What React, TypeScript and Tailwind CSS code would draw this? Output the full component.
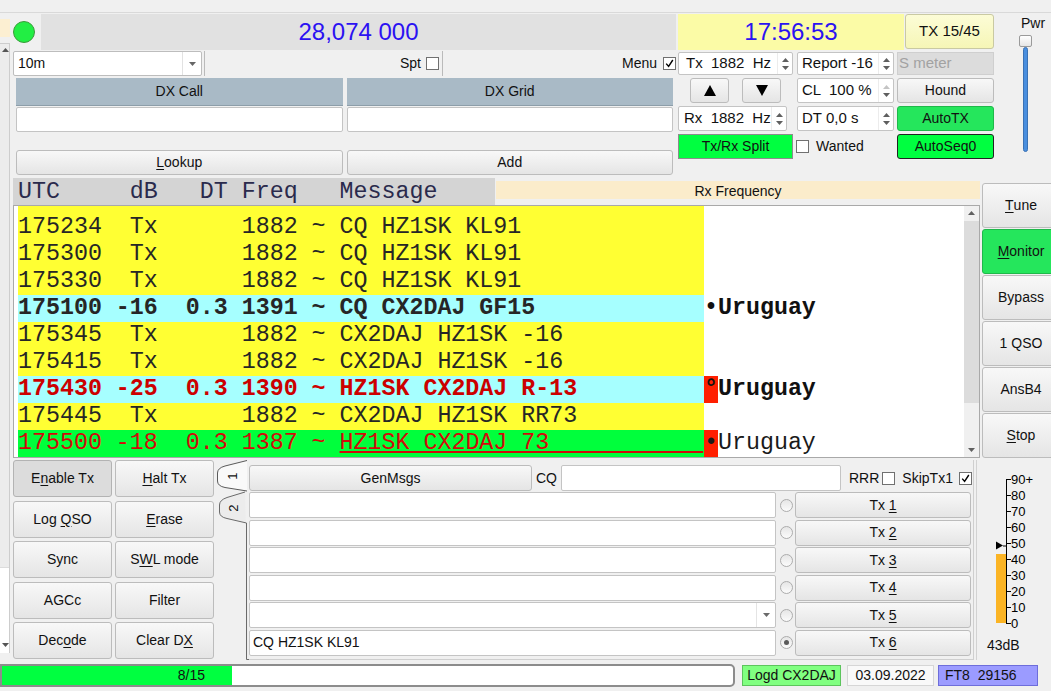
import React from "react";

const SANS = "font-['Liberation_Sans',Arial,sans-serif]";
const MONO = "font-['Liberation_Mono','Courier_New',monospace]";

const TONES: Record<string, string> = {
  plain: "rounded-[3px] border-[#bcbcbc] bg-linear-to-b from-[#f8f8f8] to-[#e5e5e5]",
  pressed: "rounded-[3px] border-[#b3b3b3] bg-[#dcdcdc]",
  green: "rounded-[3px] border-[#1fb84a] bg-[#25e65c]",
  split: "border-[#8c8c8c] bg-[#00ff40]",
  seq: "rounded-[3px] border-[#222] bg-[#00ff40]",
  tx: "rounded-[3px] border-[#c9c9a2] bg-linear-to-b from-[#fcfcd6] to-[#f6f6b6]",
};

function Btn({ children, className = "", tone = "plain" }: { children: React.ReactNode; className?: string; tone?: string }) {
  return (
    <div className={"flex items-center justify-center border text-[14px] text-[#111] whitespace-pre " + TONES[tone] + " " + className}>
      {children}
    </div>
  );
}

function U({ children }: { children: React.ReactNode }) {
  return <span className="underline underline-offset-2">{children}</span>;
}

function Check({ on = false }: { on?: boolean }) {
  return (
    <div className="w-[13px] h-[13px] border border-[#707070] bg-white flex items-center justify-center">
      {on && (
        <svg width="9" height="9" viewBox="0 0 9 9">
          <path d="M1.2 4.6 L3.6 7.4 L7.8 1" stroke="#000" strokeWidth="1.4" fill="none" />
        </svg>
      )}
    </div>
  );
}

function Radio({ on = false }: { on?: boolean }) {
  return (
    <div className="w-[13px] h-[13px] rounded-full border border-[#acacac] bg-linear-to-b from-[#e6e6e6] to-[#fbfbfb] flex items-center justify-center">
      {on && <div className="w-[5px] h-[5px] rounded-full bg-[#5a5a5a]" />}
    </div>
  );
}

function Up({ fill = "#5f5f5f" }: { fill?: string }) {
  return (
    <svg width="7" height="4" viewBox="0 0 7 4" className="block">
      <path d="M0 4 L3.5 0 L7 4Z" fill={fill} />
    </svg>
  );
}

function Down({ fill = "#5f5f5f" }: { fill?: string }) {
  return (
    <svg width="7" height="4" viewBox="0 0 7 4" className="block">
      <path d="M0 0 L3.5 4 L7 0Z" fill={fill} />
    </svg>
  );
}

function Spin({ text, className, pad, upDim = false }: { text: string; className: string; pad: string; upDim?: boolean }) {
  return (
    <div className={"flex h-full border border-[#c4c4c4] rounded-[2px] bg-white " + className}>
      <div className={"flex-1 flex items-center text-[15px] whitespace-pre " + pad}>{text}</div>
      <div className="w-[15px] flex flex-col items-center justify-center gap-[4px] border-l border-[#ececec]">
        <Up fill={upDim ? "#c4c4c4" : "#5f5f5f"} />
        <Down />
      </div>
    </div>
  );
}

function Field({ children, arrow = false }: { children?: React.ReactNode; arrow?: boolean }) {
  return (
    <div className="w-[527px] h-full flex bg-white border border-[#c4c4c4] rounded-[2px]">
      <div className="flex-1 flex items-center pl-[3px] text-[14px]">{children}</div>
      {arrow && (
        <div className="w-[19px] border-l border-[#e4e4e4] flex items-center justify-center">
          <Down fill="#6a6a6a" />
        </div>
      )}
    </div>
  );
}

const Y = "bg-[#ffff33]";
const C = "bg-[#a6ffff]";

const rows = [
  { t: "175234  Tx      1882 ~ CQ HZ1SK KL91", bg: Y },
  { t: "175300  Tx      1882 ~ CQ HZ1SK KL91", bg: Y },
  { t: "175330  Tx      1882 ~ CQ HZ1SK KL91", bg: Y },
  { t: "175100 -16  0.3 1391 ~ CQ CX2DAJ GF15", bg: C, bold: true, mark: "•", country: true },
  { t: "175345  Tx      1882 ~ CX2DAJ HZ1SK -16", bg: Y },
  { t: "175415  Tx      1882 ~ CX2DAJ HZ1SK -16", bg: Y },
  { t: "175430 -25  0.3 1390 ~ HZ1SK CX2DAJ R-13", bg: C, bold: true, red: true, mark: "°", flag: true, country: true },
  { t: "175445  Tx      1882 ~ CX2DAJ HZ1SK RR73", bg: Y },
];

function Meter() {
  const labels = ["0", "10", "20", "30", "40", "50", "60", "70", "80", "90+"];
  return (
    <svg width="73" height="200" className="block">
      <rect x="19" y="94" width="10" height="69" fill="#fbb424" />
      <line x1="29.5" y1="19" x2="29.5" y2="163.5" stroke="#000" />
      {labels.map((l, i) => {
        const y = 163 - i * 16;
        return (
          <g key={l}>
            <line x1="29" y1={y + 0.5} x2="34" y2={y + 0.5} stroke="#000" />
            <text x="34" y={y + 5} fontSize="13" fill="#000" fontFamily="Liberation Sans, Arial, sans-serif">
              {l}
            </text>
          </g>
        );
      })}
      <path d="M19 81.5 L26 85.5 L19 89.5Z" fill="#000" />
      <line x1="26" y1="86" x2="29" y2="86" stroke="#000" />
      <text x="10" y="190" fontSize="14" fill="#111" fontFamily="Liberation Sans, Arial, sans-serif">
        43dB
      </text>
    </svg>
  );
}

function Tabs() {
  return (
    <svg width="33" height="200" className="block ml-[2px]">
      <path d="M29 32 L11 37.5 Q3.5 40 3.5 45 L3.5 52 Q3.5 57 11 58.5 L30.5 63 L30.5 199.5 L33 199.5" fill="#ececec" stroke="#6a6a6a" />
      <path d="M31 0.5 L9 6 Q1.5 8 1.5 13 L1.5 21 Q1.5 26 9 27.5 L31 31" fill="#f9f9f9" stroke="#5a5a5a" />
      <text x="16" y="16" fontSize="13" textAnchor="middle" dominantBaseline="central" transform="rotate(-90 16 16)" fill="#111" fontFamily="Liberation Sans, Arial, sans-serif">
        1
      </text>
      <text x="17" y="48" fontSize="13" textAnchor="middle" dominantBaseline="central" transform="rotate(-90 17 48)" fill="#111" fontFamily="Liberation Sans, Arial, sans-serif">
        2
      </text>
    </svg>
  );
}

export default function App() {
  const leftBtns: [React.ReactNode, string][] = [
    [<>E<U>n</U>able Tx</>, "pressed"],
    [<><U>H</U>alt Tx</>, "plain"],
    [<>Log <U>Q</U>SO</>, "plain"],
    [<><U>E</U>rase</>, "plain"],
    [<>Sync</>, "plain"],
    [<>S<U>W</U>L mode</>, "plain"],
    [<>AGCc</>, "plain"],
    [<>Filter</>, "plain"],
    [<>Dec<U>o</U>de</>, "plain"],
    [<>Clear D<U>X</U></>, "plain"],
  ];
  const sideBtns: [React.ReactNode, string][] = [
    [<><U>T</U>une</>, "plain"],
    [<><U>M</U>onitor</>, "green"],
    [<>Bypass</>, "plain"],
    [<>1 QSO</>, "plain"],
    [<>AnsB4</>, "plain"],
    [<><U>S</U>top</>, "plain"],
  ];

  return (
    <div className={`w-[1051px] h-[691px] overflow-hidden bg-[#f0f0f0] text-[#111] flex flex-col ${SANS}`}>
      <div className="h-[13px] shrink-0 border-b border-[#d9d9d9]" />

      <div className="h-[647px] flex">
        {/* cut-off pane at the left edge */}
        <div className="w-[11px] flex flex-col">
          <div className="h-[6px]" />
          <div className="h-[18px] w-[10px] bg-[#fcefd2]" />
          <div className="h-[6px]" />
          <div className="flex-1 flex flex-col border-t border-r border-[#cdcdcd] bg-[#ececec]">
            <div className="mt-[4px] ml-[2px]">
              <Up fill="#555" />
            </div>
            <div className="flex-1" />
            <div className="h-[86px] bg-white border-t border-[#dcdcdc] flex flex-col justify-end pb-[6px] pl-[2px]">
              <Down fill="#555" />
            </div>
          </div>
          <div className="h-[7px]" />
        </div>

        <div className="flex-1 pl-[3px] flex flex-col">
          {/* top controls */}
          <div className="h-[164px] flex">
            <div className="w-[663px] pt-[1px] flex flex-col">
              <div className="h-[36px] flex items-center">
                <div className="w-[22px] h-[22px] rounded-full bg-[#22ee44] border border-[#3b9b3b]" />
                <div className="ml-[6px] w-[635px] h-full bg-[#e1e1e1] flex items-center justify-center text-[24px] text-[#2b12f2]">28,074 000</div>
              </div>
              <div className="mt-[1px] h-[25px] flex items-center text-[14px]">
                <div className="w-[189px] h-full flex border border-[#bdbdbd] rounded-[2px] bg-white">
                  <div className="flex-1 flex items-center pl-[4px]">10m</div>
                  <div className="w-[19px] border-l border-[#e2e2e2] flex items-center justify-center">
                    <Down fill="#666" />
                  </div>
                </div>
                <div className="ml-[2px] w-px h-full bg-[#bababa]" />
                <div className="w-[237px] flex items-center justify-end pr-[3px]">
                  Spt
                  <div className="ml-[5px]">
                    <Check />
                  </div>
                </div>
                <div className="w-px h-full bg-[#bababa]" />
                <div className="flex-1 flex items-center justify-end">
                  Menu
                  <div className="ml-[6px]">
                    <Check on />
                  </div>
                </div>
              </div>
              <div className="mt-[2px] px-[3px] grid grid-cols-2 gap-x-[4px]">
                {[
                  ["DX Call", <><U>L</U>ookup</>],
                  ["DX Grid", <>Add</>],
                ].map(([h, b], i) => (
                  <div key={i} className="flex flex-col">
                    <div className="h-[28px] bg-[#a9bac6] border-b border-[#8d9ea9] flex items-center justify-center text-[14px]">{h}</div>
                    <div className="mt-[1px] h-[25px] bg-white border border-[#c4c4c4] rounded-[2px]" />
                    <Btn className="mt-[18px] h-[25px]">{b}</Btn>
                  </div>
                ))}
              </div>
            </div>

            <div className="ml-[2px] w-[316px] pt-[1px] flex flex-col text-[14px]">
              <div className="h-[36px] flex">
                <div className="w-[226px] bg-[#fbfba6] flex items-center justify-center text-[24px] text-[#2b12f2]">17:56:53</div>
                <Btn tone="tx" className="ml-[1px] w-[89px] h-[35px] text-[15px]">TX 15/45</Btn>
              </div>
              <div className="mt-[2px] h-[23px] flex">
                <Spin text="Tx  1882  Hz" className="w-[115px]" pad="pl-[7px]" />
                <Spin text="Report -16" className="ml-[4px] w-[97px]" pad="pl-[4px]" />
                <div className="ml-[3px] w-[97px] h-full bg-[#dcdcdc] border border-[#cfcfcf] flex items-center pl-[1px] text-[15px] text-[#a2a2a2]">S meter</div>
              </div>
              <div className="mt-[3px] h-[25px] flex">
                <div className="w-[115px] flex">
                  <Btn className="ml-[12px] w-[39px] h-full">
                    <svg width="12" height="11" viewBox="0 0 12 11"><path d="M0 11 L6 0 L12 11Z" fill="#000" /></svg>
                  </Btn>
                  <Btn className="ml-[13px] w-[39px] h-full">
                    <svg width="12" height="11" viewBox="0 0 12 11"><path d="M0 0 L6 11 L12 0Z" fill="#000" /></svg>
                  </Btn>
                </div>
                <Spin text="CL  100 %" className="ml-[4px] w-[97px] h-[24px]" pad="pl-[4px]" upDim />
                <Btn className="ml-[3px] w-[97px] h-full">Hound</Btn>
              </div>
              <div className="mt-[3px] h-[25px] flex">
                <div className="w-[115px]">
                  <Spin text="Rx  1882  Hz" className="w-[109px]" pad="pl-[5px]" />
                </div>
                <Spin text="DT 0,0 s" className="ml-[4px] w-[97px]" pad="pl-[4px]" />
                <Btn tone="green" className="ml-[3px] w-[97px] h-full">AutoTX</Btn>
              </div>
              <div className="mt-[3px] h-[25px] flex">
                <Btn tone="split" className="w-[115px] h-full text-[14.5px]">Tx/Rx Split</Btn>
                <div className="w-[104px] flex items-center pl-[3px]">
                  <Check />
                  <span className="ml-[7px]">Wanted</span>
                </div>
                <Btn tone="seq" className="w-[97px] h-full">AutoSeq0</Btn>
              </div>
            </div>

            <div className="flex-1 flex flex-col items-start pl-[25px] pt-[2px]">
              <div className="ml-[2px] text-[14px] leading-[16px]">Pwr</div>
              <div className="mt-[4px] w-[13px] h-[12px] rounded-[2px] border border-[#9a9a9a] bg-linear-to-b from-white to-[#e6e6e6]" />
              <div className="ml-[4px] w-[5px] h-[105px] rounded-full bg-[#4a8fdf] border border-[#3b72b4]" />
            </div>
          </div>

          {/* decode window */}
          <div className="h-[281px] flex">
            <div className="w-[967px] flex flex-col">
              <div className="mt-[1px] h-[27px] flex">
                <div className={`w-[482px] h-full bg-[#d4d4d4] pl-[5px] pt-[2px] flex items-center whitespace-pre text-[23.3px] text-[#2a2a4c] ${MONO}`}>
                  {"UTC     dB   DT Freq   Message"}
                </div>
                <div className="ml-[1px] flex-1 mt-[3px] h-[18px] overflow-hidden bg-[#fbeccb] text-center text-[14px] leading-[20px]">Rx Frequency</div>
              </div>
              <div className="h-[253px] border border-[#a9a9a9] bg-white flex">
                <div className={`flex-1 pl-[4px] text-[23.3px] ${MONO}`}>
                  <div className="w-[686px] h-[8px] bg-[#ffff33]" />
                  {rows.map((r, i) => (
                    <div key={i} className="h-[27px] flex leading-[27px] whitespace-pre">
                      <div className={`w-[686px] overflow-hidden ${r.bg} ${r.bold ? "font-bold" : ""} ${r.red ? "text-[#cc0000]" : "text-[#262626]"}`}>{r.t}</div>
                      {r.country && (
                        <div className="flex font-bold text-[#111]">
                          <span className={r.flag ? "bg-[#ff1f00]" : ""}>{r.mark}</span>
                          <span>Uruguay</span>
                        </div>
                      )}
                    </div>
                  ))}
                  <div className="h-[27px] flex leading-[27px] whitespace-pre">
                    <div className="w-[686px] overflow-hidden bg-[#00ff3c] text-[#d20a0a]">
                      {"175500 -18  0.3 1387 ~ "}
                      <span className="underline decoration-[#d20a0a] underline-offset-[2px]">{"HZ1SK CX2DAJ 73           "}</span>
                    </div>
                    <div className="flex text-[#1a1a1a]">
                      <span className="bg-[#ff1f00]">•</span>
                      <span>Uruguay</span>
                    </div>
                  </div>
                </div>
                <div className="w-[15px] bg-[#f0f0f0] flex flex-col items-center">
                  <div className="mt-[5px]">
                    <Up fill="#606060" />
                  </div>
                  <div className="mt-[6px] w-full h-[182px] bg-[#dcdcdc]" />
                  <div className="flex-1" />
                  <div className="mb-[5px]">
                    <Down fill="#606060" />
                  </div>
                </div>
              </div>
            </div>
            <div className="ml-[2px] flex-1 overflow-hidden pt-[6px] flex flex-col gap-[1px]">
              {sideBtns.map(([t, tone], i) => (
                <Btn key={i} tone={tone} className="w-[78px] h-[45px] shrink-0">
                  {t}
                </Btn>
              ))}
            </div>
          </div>

          {/* lower controls */}
          <div className="mt-[2px] h-[200px] flex">
            <div className="w-[201px] grid grid-cols-2 gap-x-[3px] gap-y-[3.5px] auto-rows-[37px] content-start">
              {leftBtns.map(([t, tone], i) => (
                <Btn key={i} tone={tone}>
                  {t}
                </Btn>
              ))}
            </div>
            <Tabs />
            <div className="w-[725px] border-r border-b border-[#cfcfcf] pt-[5px] flex flex-col text-[14px]">
              <div className="h-[26px] flex items-center">
                <Btn className="w-[283px] h-full">GenMsgs</Btn>
                <span className="ml-[4px]">CQ</span>
                <div className="ml-[4px] w-[280px] h-full bg-white border border-[#c4c4c4] rounded-[2px]" />
                <span className="ml-[8px]">RRR</span>
                <div className="ml-[3px]">
                  <Check />
                </div>
                <span className="ml-[7px]">SkipTx1</span>
                <div className="ml-[6px]">
                  <Check on />
                </div>
              </div>
              {[1, 2, 3, 4, 5, 6].map((n) => (
                <div key={n} className={`${n === 1 ? "mt-[1px]" : "mt-[1.5px]"} h-[26px] flex items-center`}>
                  <Field arrow={n === 5}>{n === 6 ? "CQ HZ1SK KL91" : null}</Field>
                  <div className="ml-[4px]">
                    <Radio on={n === 6} />
                  </div>
                  <Btn className="ml-[2px] w-[176px] h-full">
                    Tx <U>{n}</U>
                  </Btn>
                </div>
              ))}
            </div>
            <div className="ml-[2px] flex-1 border-l border-[#d2d2d2]">
              <Meter />
            </div>
          </div>
        </div>
      </div>

      {/* status bar */}
      <div className="h-[31px] flex items-start pt-[4px] text-[14px]">
        <div className="w-[735px] h-[23px] border-2 border-[#8c8c8c] rounded-r-[5px] bg-white flex overflow-hidden">
          <div className="w-[230px] h-full bg-[#00ff40] flex items-center justify-end pr-[27px]">8/15</div>
        </div>
        <div className="ml-[7px] mt-[1px] w-[99px] h-[21px] bg-[#80ff80] border border-[#5cc45c] flex items-center justify-center">Logd CX2DAJ</div>
        <div className="ml-[6px] mt-[1px] w-[87px] h-[21px] bg-[#f9f9f9] border border-[#d6d6d6] flex items-center justify-center">03.09.2022</div>
        <div className="ml-[4px] mt-[1px] w-[100px] h-[21px] bg-[#9b9bff] border border-[#6d6dda] flex items-center pl-[6px] whitespace-pre">FT8  29156</div>
      </div>
    </div>
  );
}
